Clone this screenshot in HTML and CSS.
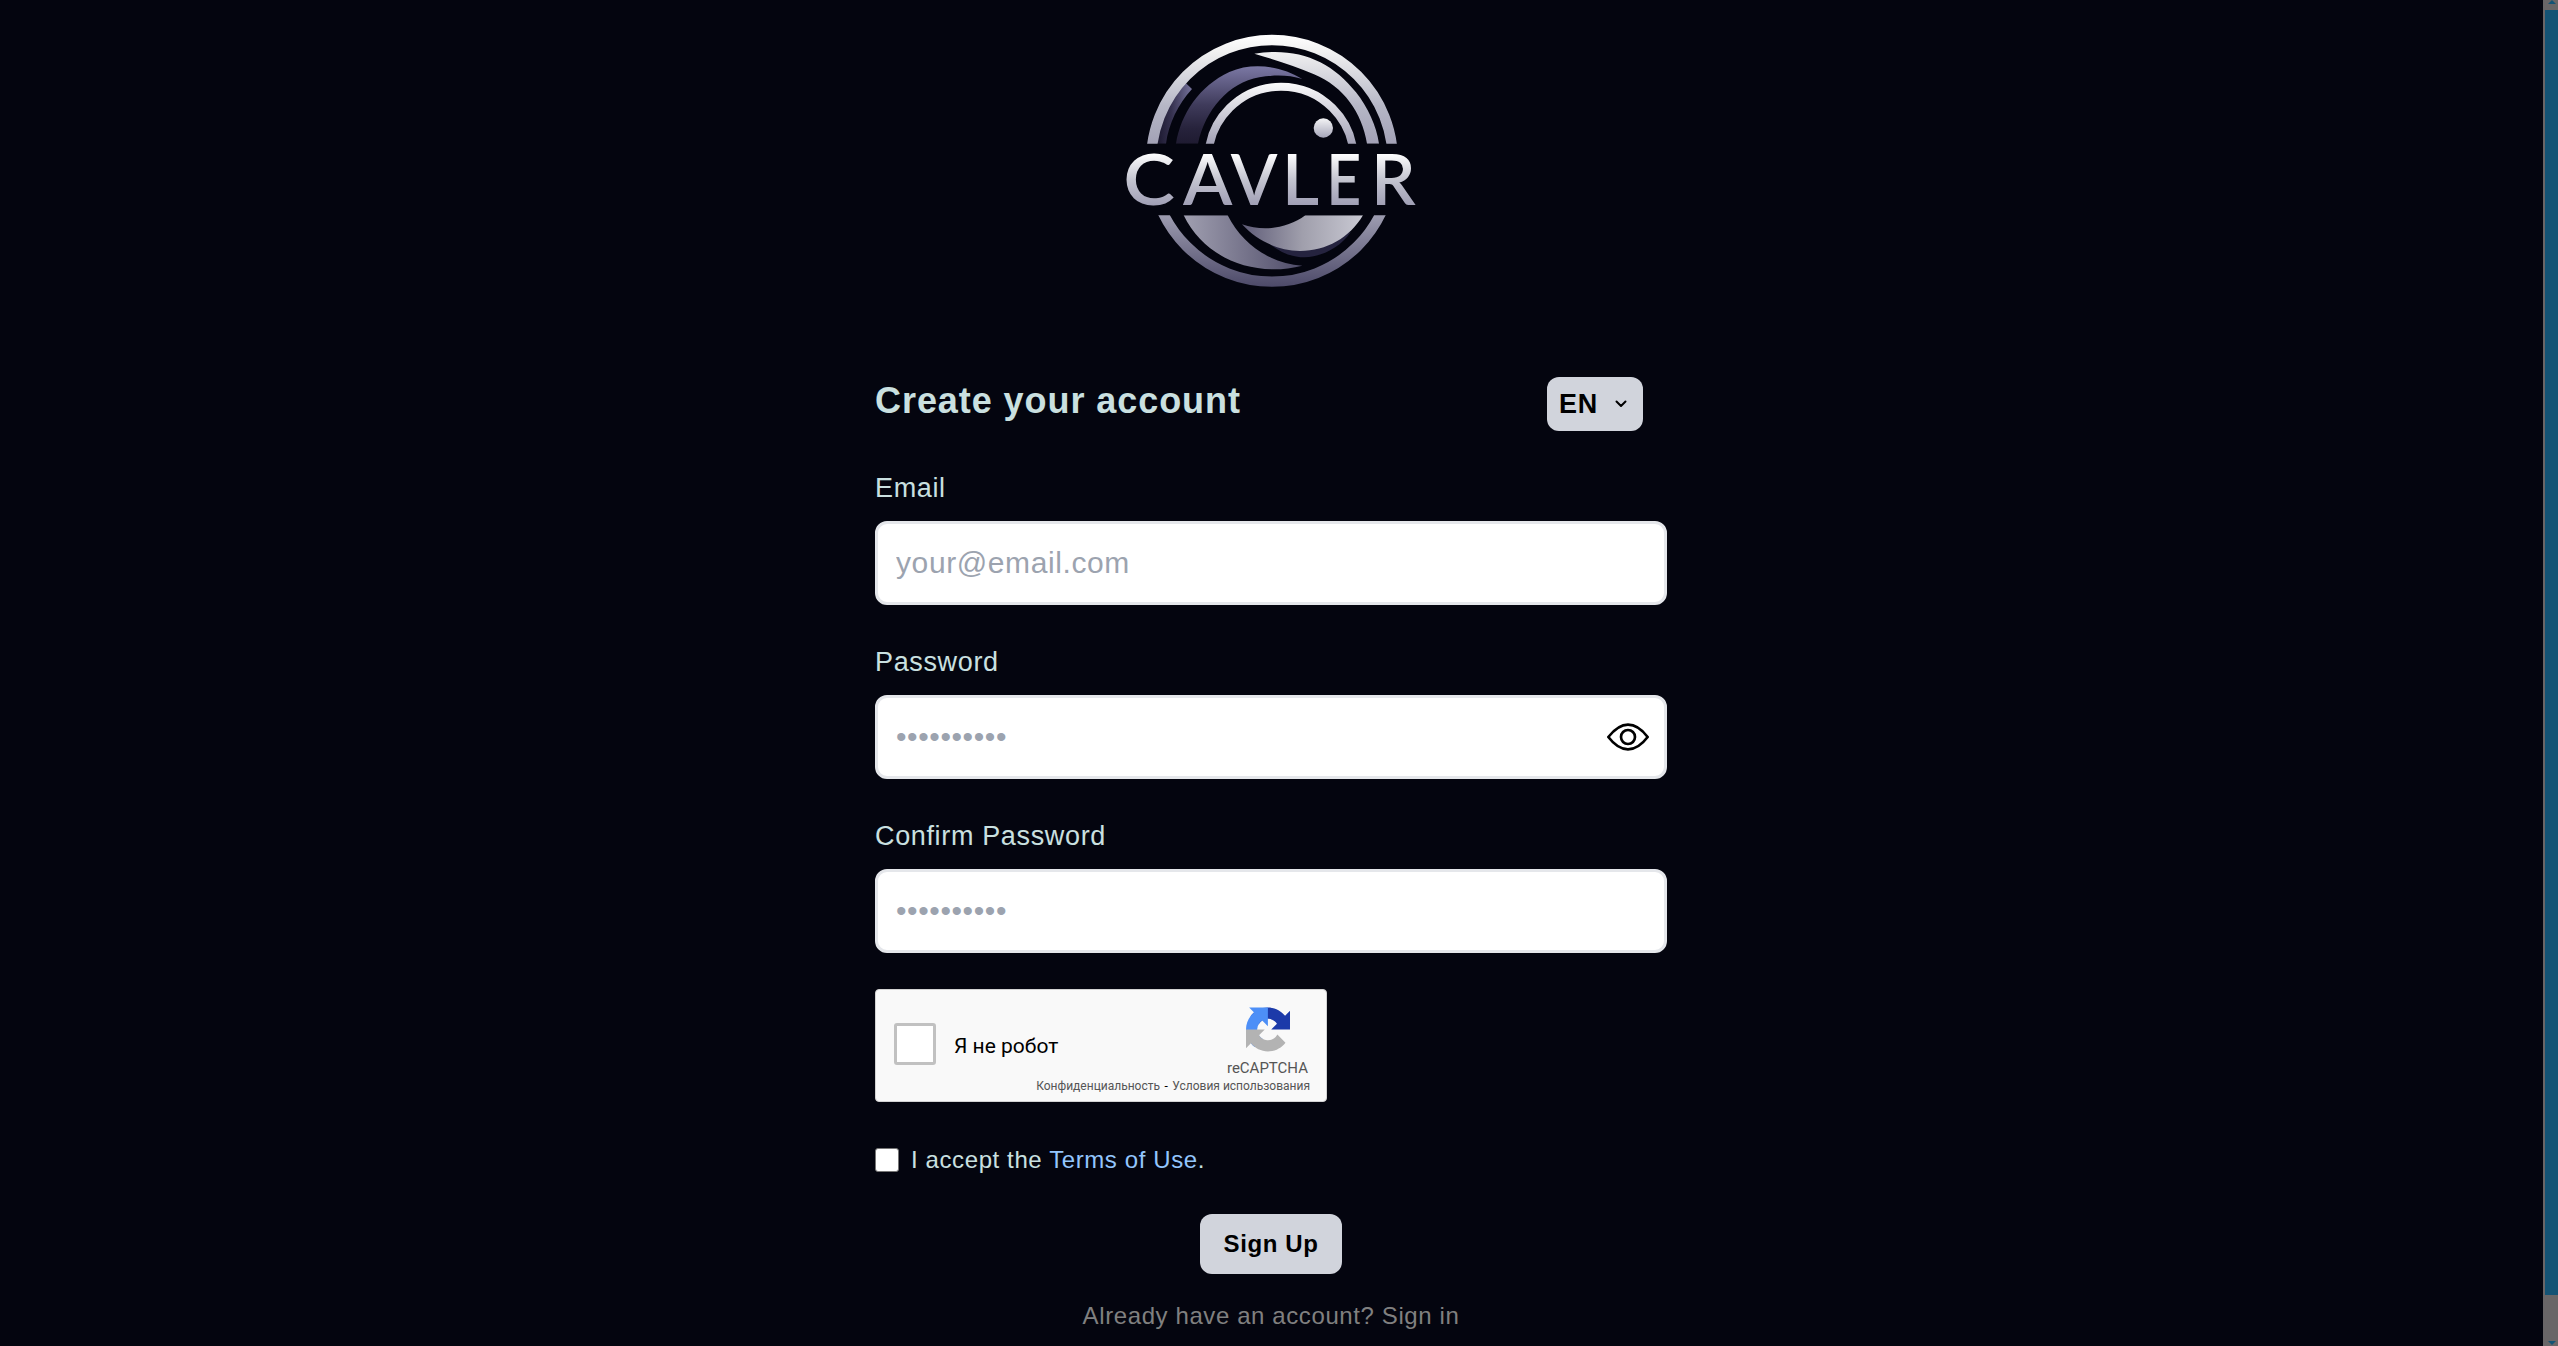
FILE: index.html
```html
<!DOCTYPE html>
<html lang="en">
<head>
    <meta charset="UTF-8">
    <meta name="viewport" content="width=device-width, initial-scale=1.0">
    <title>Cavler - Sign Up</title>
    <link rel="stylesheet" href="styles.css">
</head>
<body>
    <main class="page">
        <svg class="logo" viewBox="3 0 960 840" role="img" aria-label="Cavler">
            <defs>
                <linearGradient id="silver" gradientUnits="userSpaceOnUse" x1="0" y1="45" x2="0" y2="371">
                    <stop offset="0" stop-color="#ffffff"/>
                    <stop offset="0.15" stop-color="#f1f1f1"/>
                    <stop offset="0.65" stop-color="#b6b7c6"/>
                    <stop offset="1" stop-color="#a3a2b6"/>
                </linearGradient>
                <linearGradient id="innerSilver" gradientUnits="userSpaceOnUse" x1="0" y1="188" x2="0" y2="371">
                    <stop offset="0" stop-color="#fbfbfb"/>
                    <stop offset="1" stop-color="#a3a2b6"/>
                </linearGradient>
                <linearGradient id="dot" x1="0" y1="0" x2="0" y2="1">
                    <stop offset="0" stop-color="#f4f4f6"/>
                    <stop offset="1" stop-color="#a6a6b9"/>
                </linearGradient>
                <linearGradient id="letters" gradientUnits="userSpaceOnUse" x1="0" y1="400" x2="0" y2="556">
                    <stop offset="0" stop-color="#ffffff"/>
                    <stop offset="0.5" stop-color="#c4c5d0"/>
                    <stop offset="1" stop-color="#a09fb5"/>
                </linearGradient>
                <linearGradient id="bottom" gradientUnits="userSpaceOnUse" x1="0" y1="586" x2="0" y2="800">
                    <stop offset="0" stop-color="#9d9cb0"/>
                    <stop offset="1" stop-color="#4d4a69"/>
                </linearGradient>
                <linearGradient id="purple" x1="0" y1="0" x2="0" y2="1">
                    <stop offset="0" stop-color="#7b78a4"/>
                    <stop offset="0.5" stop-color="#3f3b5b"/>
                    <stop offset="0.8" stop-color="#27233c"/>
                    <stop offset="1" stop-color="#1f1b31"/>
                </linearGradient>
                <linearGradient id="purpleSide" x1="0" y1="0" x2="1" y2="0">
                    <stop offset="0" stop-color="#1c1930"/>
                    <stop offset="0.4" stop-color="#35314f"/>
                    <stop offset="1" stop-color="#76739c"/>
                </linearGradient>
                <linearGradient id="waveLeft" x1="0" y1="0" x2="1" y2="0">
                    <stop offset="0" stop-color="#a09fb0"/>
                    <stop offset="1" stop-color="#4f4c69"/>
                </linearGradient>
                <linearGradient id="waveRight" x1="0" y1="0" x2="1" y2="0">
                    <stop offset="0" stop-color="#5f5c78"/>
                    <stop offset="0.5" stop-color="#a09fac"/>
                    <stop offset="1" stop-color="#c9c9d3"/>
                </linearGradient>
                <clipPath id="topHalf"><rect width="960" height="371"/></clipPath>
                <clipPath id="bottomHalf"><rect y="586" width="960" height="254"/></clipPath>
            </defs>
            <g clip-path="url(#topHalf)">
                <path fill="url(#purpleSide)" d="M143 371C148 300 182 236 228 190L246 207C205 252 176 310 168 371Z"/>
                <path fill="url(#purple)" d="M198 371C212 282 269 197 358 156C430 125 515 139 577 177C535 164 492 164 448 172C355 189 286 270 264 371Z"/>
                <circle cx="486" cy="422.5" r="362.5" fill="none" stroke="url(#silver)" stroke-width="31"/>
                <circle cx="513" cy="418" r="218" fill="none" stroke="url(#innerSilver)" stroke-width="24"/>
                <path fill="url(#silver)" d="M433 101C560 80 665 122 738 217C774 263 799 317 807 371H771C756 278 701 200 612 163C557 139 502 122 433 101Z"/>
                <circle cx="640" cy="324" r="29" fill="url(#dot)"/>
            </g>
            <g class="logo-text" fill="url(#letters)">
                <text x="40" y="555" textLength="155" lengthAdjust="spacingAndGlyphs">C</text>
                <text x="219" y="555" textLength="148" lengthAdjust="spacingAndGlyphs">A</text>
                <text x="362" y="555" textLength="140" lengthAdjust="spacingAndGlyphs">V</text>
                <text x="515" y="555" textLength="112" lengthAdjust="spacingAndGlyphs">L</text>
                <text x="649" y="555" textLength="105" lengthAdjust="spacingAndGlyphs">E</text>
                <text x="783" y="555" textLength="134" lengthAdjust="spacingAndGlyphs">R</text>
            </g>
            <g clip-path="url(#bottomHalf)">
                <circle cx="486" cy="422.5" r="362.5" fill="none" stroke="url(#bottom)" stroke-width="31"/>
                <path fill="url(#waveLeft)" d="M221 586H353C397 673 480 730 577 737C430 774 283 714 221 586Z"/>
                <path fill="#25233f" d="M460 655C505 698 547 712 584 712C640 709 689 683 722 637Z"/>
                <path fill="url(#waveRight)" d="M396 613C462 637 535 624 586 586H759C718 654 650 693 570 693C500 691 440 661 396 613Z"/>
            </g>
        </svg>

        <form class="signup">
            <div class="heading">
                <h1>Create your account</h1>
                <button type="button" class="language">
                    EN
                    <svg class="chevron" viewBox="0 0 12 8"><path d="M1.5 1.5L6 6L10.500 1.500"/></svg>
                </button>
            </div>

            <div class="field">
                <label for="email">Email</label>
                <div class="input-box">
                    <input type="email" id="email" placeholder="your@email.com">
                </div>
            </div>

            <div class="field">
                <label for="password">Password</label>
                <div class="input-box">
                    <input type="password" id="password" placeholder="••••••••••">
                    <svg class="eye" viewBox="141 129 126 84">
                        <path d="M145 171C165 146 185 134 204 134S244 146 263 171C244 196 223 208 204 208S164 196 145 171Z"/>
                        <circle cx="204" cy="171" r="21"/>
                    </svg>
                </div>
            </div>

            <div class="field">
                <label for="confirm">Confirm Password</label>
                <div class="input-box">
                    <input type="password" id="confirm" placeholder="••••••••••">
                </div>
            </div>

            <div class="captcha" lang="ru">
                <div class="captcha-main">
                    <span class="captcha-check"></span>
                    <span class="captcha-label">Я не робот</span>
                    <div class="captcha-brand">
                        <svg viewBox="0 0 64 64">
                            <path fill="#1c3aa9" d="M64 31.955l-.016-1.370V4.687l-7.160 7.160C50.964 4.674 42.033.093 32.050.093c-10.400 0-19.622 4.960-25.458 12.640l11.736 11.860a15.550 15.550 0 0 1 4.754-5.334c2.050-1.600 4.952-2.906 8.968-2.906.485 0 .860.057 1.135.163 4.976.393 9.288 3.140 11.828 7.124l-8.307 8.307L64 31.953"/>
                            <path fill="#4d8ff7" d="M31.862.094l-1.370.016H4.594l7.160 7.160C4.580 13.147 0 22.080 0 32.046c0 10.400 4.960 19.622 12.640 25.458L24.500 45.768a15.550 15.550 0 0 1-5.334-4.754c-1.600-2.050-2.906-4.952-2.906-8.968 0-.485.057-.860.163-1.135.393-4.976 3.140-9.288 7.124-11.828l8.307 8.307L31.860.095"/>
                            <path fill="#b3b3b3" d="M.001 32.045l.016 1.370v25.898l7.160-7.160c5.873 7.173 14.804 11.754 24.770 11.754 10.400 0 19.622-4.960 25.458-12.640l-11.736-11.860a15.550 15.550 0 0 1-4.754 5.334c-2.050 1.600-4.952 2.906-8.968 2.906-.485 0-.860-.057-1.135-.163-4.976-.393-9.288-3.140-11.828-7.124l8.307-8.307c-10.522.040-22.400.066-27.295-.005"/>
                        </svg>
                        <span>reCAPTCHA</span>
                    </div>
                </div>
                <div class="captcha-links">Конфиденциальность<i>-</i>Условия использования</div>
            </div>

            <div class="terms">
                <span class="terms-check"></span>
                <span>I accept the <a>Terms of Use</a>.</span>
            </div>

            <button type="button" class="submit">Sign Up</button>
            <p class="signin">Already have an account? Sign in</p>
        </form>
    </main>

    <div class="scrollbar">
        <span class="arrow-up"></span>
        <div class="thumb"></div>
        <span class="arrow-down"></span>
    </div>
</body>
</html>
```
FILE: styles.css
```css
* {
    box-sizing: border-box;
}
body {
    margin: 0;
    display: flex;
    height: 1346px;
    overflow: hidden;
    background-color: #04050f;
    color: #cae0e0;
    font-family: "Liberation Sans", Arial, sans-serif;
}
.page {
    flex: 1;
    display: flex;
    flex-direction: column;
    align-items: center;
    padding: 20px 1px 0 0;
}
.logo {
    width: 320px;
    height: 280px;
}
.logo-text {
    font-family: Lato, sans-serif;
    font-size: 214px;
    font-weight: 600;
}

/* form */
.signup {
    display: flex;
    flex-direction: column;
    width: 792px;
    margin-top: 77px;
}
.heading {
    display: flex;
    justify-content: space-between;
    align-items: flex-start;
    padding-right: 24px;
    margin-bottom: 36px;
}
h1 {
    margin: 0;
    font-size: 36px;
    line-height: 48px;
    letter-spacing: 0.026em;
}
button {
    border: none;
    border-radius: 12px;
    background-color: #d1d4dc;
    color: #000;
    font-family: inherit;
    font-weight: bold;
    letter-spacing: 0.025em;
}
.language {
    display: flex;
    align-items: center;
    justify-content: space-between;
    width: 96px;
    height: 54px;
    padding: 0 16px 0 12px;
    font-size: 27px;
}
.chevron {
    width: 12px;
    height: 8px;
    fill: none;
    stroke: #000;
    stroke-width: 2;
    stroke-linecap: round;
    stroke-linejoin: round;
}
.field {
    display: flex;
    flex-direction: column;
    gap: 12px;
    margin-bottom: 36px;
}
.field label {
    font-size: 27px;
    line-height: 42px;
    letter-spacing: 0.024em;
}
.input-box {
    display: flex;
    align-items: center;
    height: 84px;
    padding: 0 15px 0 18px;
    border: 3px solid #e5e7eb;
    border-radius: 12px;
    background-color: #fff;
}
.input-box input {
    flex: 1;
    padding: 0;
    border: none;
    outline: none;
    background: none;
    font-family: inherit;
    font-size: 30px;
    letter-spacing: 0.02em;
}
.input-box input::placeholder {
    color: #9ca3af;
}
.eye {
    width: 42px;
    height: 28px;
    fill: none;
    stroke: #000;
    stroke-width: 8;
    stroke-linejoin: round;
}

/* captcha */
.captcha {
    width: 452px;
    height: 113px;
    padding: 17px 16px 0 18px;
    border: 1px solid #d3d3d3;
    border-radius: 4px;
    background-color: #f9f9f9;
    font-family: Roboto, sans-serif;
}
.captcha-main {
    display: flex;
    align-items: center;
    height: 72px;
}
.captcha-check {
    width: 42px;
    height: 42px;
    margin-top: 2px;
    border: 3px solid #c1c1c1;
    border-radius: 3px;
    background-color: #fff;
}
.captcha-label {
    margin: 6px 0 0 18px;
    color: #000;
    font-size: 21px;
}
.captcha-brand {
    display: flex;
    flex-direction: column;
    align-items: center;
    align-self: flex-start;
    margin-left: auto;
    margin-right: 2px;
    color: #555;
    font-size: 15px;
    line-height: 18px;
}
.captcha-brand svg {
    width: 44px;
    height: 45px;
    margin: 0 0 7px 1px;
}
.captcha-links {
    color: #555;
    font-size: 12px;
    line-height: 14px;
    text-align: right;
}
.captcha-links i {
    margin: 0 4.5px;
    color: #000;
    font-style: normal;
}

.terms {
    display: flex;
    align-items: center;
    gap: 12px;
    margin-top: 40px;
    font-size: 24px;
    line-height: 36px;
    letter-spacing: 0.025em;
}
.terms-check {
    width: 24px;
    height: 24px;
    border: 1px solid #767676;
    border-radius: 3px;
    background-color: #fff;
}
.terms a {
    color: #93c5fd;
}
.submit {
    align-self: center;
    width: 142px;
    height: 60px;
    margin-top: 36px;
    padding: 0;
    font-size: 24px;
}
.signin {
    margin: 24px 0 0;
    color: #808080;
    font-size: 24px;
    line-height: 36px;
    letter-spacing: 0.025em;
    text-align: center;
}

/* page scrollbar */
.scrollbar {
    display: flex;
    flex-direction: column;
    align-items: center;
    width: 15px;
    padding: 0 0 1px 2px;
    background-color: #696667;
}
.scrollbar .thumb {
    align-self: stretch;
    height: 1285px;
    margin: 6px 0 46px;
    background-color: #145374;
}
.arrow-up, .arrow-down {
    border: 4px solid transparent;
}
.arrow-up {
    border-top: none;
    border-bottom-color: #145374;
}
.arrow-down {
    border-bottom: none;
    border-top-color: #145374;
}
```
